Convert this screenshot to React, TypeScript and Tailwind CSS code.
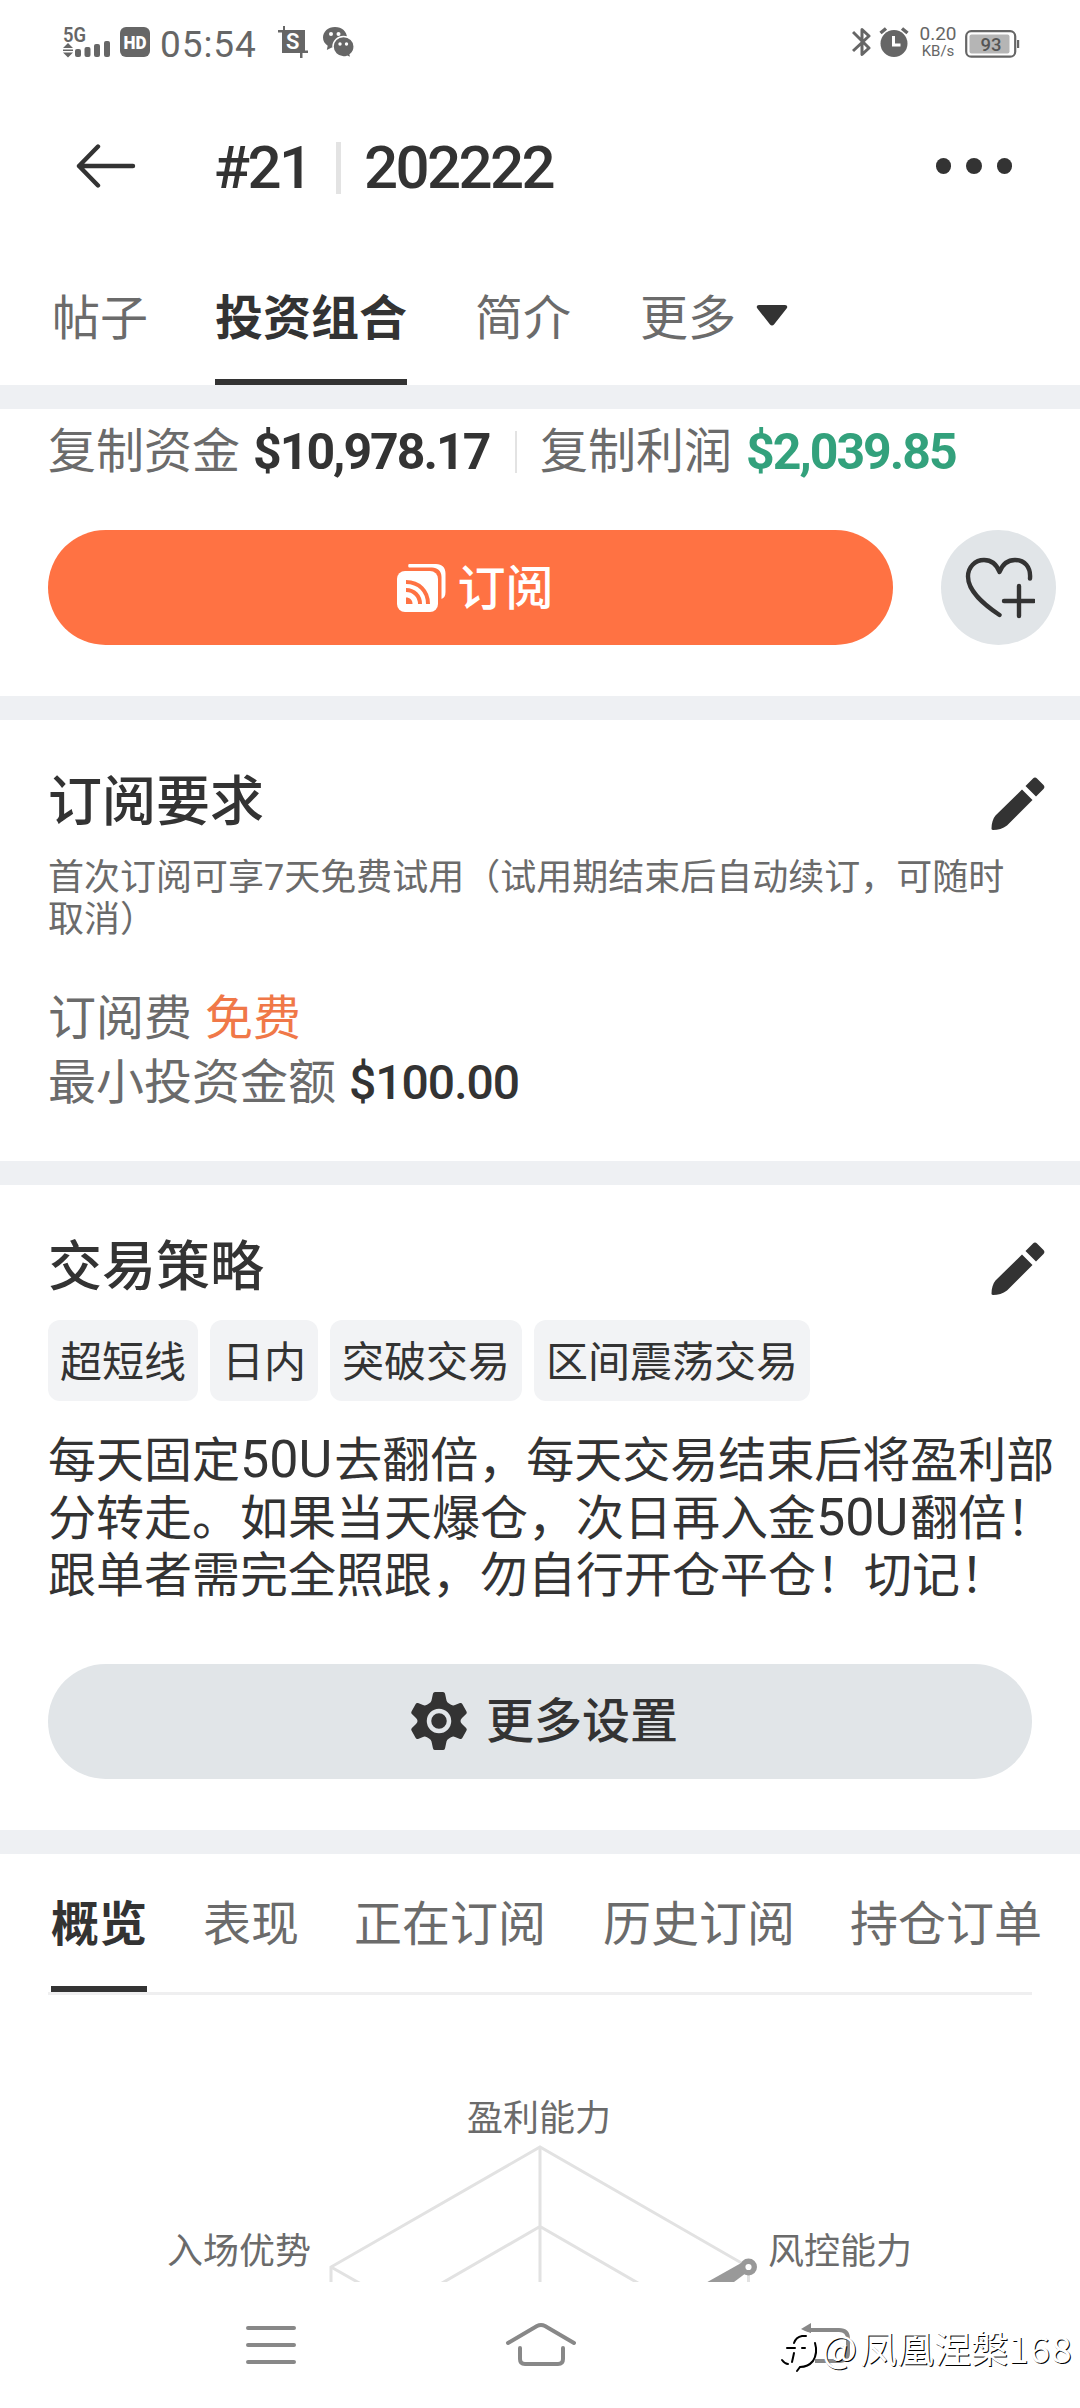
import type { ReactNode } from 'react';

const INK = '#333333';
const STATUS = '#666666';

const mainTabs = [
  { label: '帖子', className: 'ml-[4px]' },
  { label: '投资组合', className: 'ml-[67px]', active: true },
  { label: '简介', className: 'ml-[68px]' },
  { label: '更多', className: 'ml-[69px]' },
];

const tags = ['超短线', '日内', '突破交易', '区间震荡交易'];

const detailTabs = [
  { label: '概览', className: 'ml-[3px]', active: true },
  { label: '表现', className: 'ml-[56px]' },
  { label: '正在订阅', className: 'ml-[55px]' },
  { label: '历史订阅', className: 'ml-[57px]' },
  { label: '持仓订单', className: 'ml-[55px]' },
];

export default function App() {
  return (
    <div className="relative flex h-[2408px] w-[1080px] flex-col overflow-hidden bg-white font-['Roboto','Noto_Sans_CJK_SC',sans-serif] text-[#333]">
      <StatusBar />
      <Header />
      <MainTabs />
      <Band />
      <Summary />
      <Band />
      <Requirements />
      <Band />
      <Strategy />
      <Band />
      <DetailTabs />
      <Radar />
      <NavBar />
      <Watermark />
    </div>
  );
}

function Band() {
  return <div className="h-6 shrink-0 bg-[#eef0f3]" />;
}

function StatusBar() {
  return (
    <div className="flex h-[84px] shrink-0 items-center pr-[60px] pl-[61px] text-[#666]">
      <svg width="50" height="44" viewBox="-2 -6 50 44" fill={STATUS}>
        <text x="0" y="15.500" fontSize="20" fontWeight="600" textLength="23" lengthAdjust="spacingAndGlyphs">5G</text>
        <path d="M5 17l5 5H0zM0 23.500h10V25H0zM0 26.500h10l-5 5z" />
        <rect x="12" y="23" width="6" height="8" rx="2" />
        <rect x="21.500" y="21" width="6" height="10" rx="2" />
        <rect x="31" y="18" width="6" height="13" rx="2" />
        <rect x="41" y="15" width="6" height="16" rx="2" />
      </svg>
      <svg className="ml-[9px]" width="30" height="30" viewBox="0 0 30 30">
        <rect width="30" height="30" rx="6" fill={STATUS} />
        <text x="3.500" y="22" fontSize="19" fontWeight="900" textLength="23" lengthAdjust="spacingAndGlyphs" fill="#fff">HD</text>
      </svg>
      <span className="mt-[5px] ml-[10px] w-[118px] text-[37px] leading-none tracking-[0.9px]">05:54</span>
      <svg width="30" height="32" viewBox="0 0 30 32">
        <path d="M5 0v4H0v2.500h4V27h18v5h2.500v-5H30v-2.500h-3V4H7V0z" fill={STATUS} />
        <text x="8" y="23" fontSize="22" fontWeight="600" fill="#fff">S</text>
      </svg>
      <svg className="ml-[15px]" width="32" height="32" viewBox="0 0 32 32">
        <path d="M12 1C5 1 0 5.700 0 11.500c0 3.500 1.800 6.300 4.700 8.200L3.800 24l5-2.500c1 .3 2.100.4 3.200.4 7 0 12-4.700 12-10.400S19 1 12 1z" fill={STATUS} />
        <circle cx="8" cy="8" r="2" fill="#fff" />
        <circle cx="15.500" cy="8" r="2" fill="#fff" />
        <path d="M20.500 10.500C14.500 10.500 10 15 10 20.500S14.500 31 20.500 31c1.300 0 2.500-.2 3.600-.6L28 32l-.8-3.500c2.500-1.800 4-4.700 4-8 0-5.500-4.600-10-10.700-10z" fill={STATUS} stroke="#fff" strokeWidth="1.500" />
        <circle cx="17" cy="18" r="1.700" fill="#fff" />
        <circle cx="23.500" cy="18" r="1.700" fill="#fff" />
      </svg>
      <div className="flex-1" />
      <svg width="19" height="30" viewBox="0 0 19 30" fill="none" stroke={STATUS} strokeWidth="3" strokeLinejoin="round">
        <path d="M1 5l16 16-7 6.500V2.500L17 9 1 24" />
      </svg>
      <svg className="ml-[8px]" width="30" height="30" viewBox="0 0 30 30">
        <circle cx="15" cy="16.500" r="13.500" fill={STATUS} />
        <path d="M1.500 6L7 1.500M28.500 6L23 1.500" stroke={STATUS} strokeWidth="3.500" />
        <path d="M14.500 9v9h7" fill="none" stroke="#fff" strokeWidth="3" />
      </svg>
      <div className="ml-[9px] flex w-[40px] flex-col items-center">
        <span className="text-[19px] leading-[18px]">0.20</span>
        <span className="text-[15px] leading-[16px]">KB/s</span>
      </div>
      <svg className="mt-[3px] ml-[7px]" width="55" height="28" viewBox="0 0 55 28">
        <rect x="1.200" y="1.200" width="49" height="25.500" rx="5" fill="#fff" stroke={STATUS} strokeWidth="2.200" />
        <rect x="4.500" y="4.500" width="40" height="19" rx="2" fill="#b5b5b5" />
        <rect x="52" y="10" width="2.200" height="8" fill={STATUS} />
        <text x="26" y="21" fontSize="18.500" fontWeight="500" textAnchor="middle" fill="#555">93</text>
      </svg>
    </div>
  );
}

function Header() {
  return (
    <header className="flex h-[164px] shrink-0 items-center pr-[67px] pl-[76px]">
      <svg width="60" height="44" viewBox="0 0 60 44" fill="none" stroke={INK} strokeWidth="4.400" strokeLinecap="round" strokeLinejoin="round">
        <path d="M22 2.500L3 22l19 19.500M3 22h54" />
      </svg>
      <h1 className="mt-[3px] ml-[78px] flex items-center text-[60px] leading-none font-medium tracking-[-2.600px]">
        <span className="w-[122px]">#21</span>
        <span className="h-[52px] w-[5px] bg-[#e3e3e3]" />
        <span className="ml-[23px]">202222</span>
      </h1>
      <div className="flex-1" />
      <div className="flex gap-[15px] pr-px">
        <i className="size-[15.500px] rounded-full bg-[#333]" />
        <i className="size-[15.500px] rounded-full bg-[#333]" />
        <i className="size-[15.500px] rounded-full bg-[#333]" />
      </div>
    </header>
  );
}

function MainTabs() {
  return (
    <nav className="flex h-[137px] shrink-0 pl-12 text-[48px] whitespace-nowrap">
      {mainTabs.map((t) => (
        <Tab key={t.label} className={t.className} active={t.active}>
          {t.label}
        </Tab>
      ))}
      <svg className="mt-[57px] ml-[20px]" width="32" height="22" viewBox="0 0 32 22" fill={INK}>
        <path d="M3 0h26c2 0 3 2 1.600 3.500L18 19.500c-1 1.300-3 1.300-4 0L1.400 3.500C0 2 1 0 3 0z" />
      </svg>
    </nav>
  );
}

function Tab({ className, active, children }: { className: string; active?: boolean; children: ReactNode }) {
  return (
    <div
      className={`${className} border-b-6 pt-[36px] leading-[70px] ${
        active ? 'border-[#333] font-bold text-[#333]' : 'border-transparent text-[#6b6b6b]'
      }`}
    >
      {children}
    </div>
  );
}

function Summary() {
  return (
    <section className="flex h-[287px] shrink-0 flex-col pl-12 text-[48px]">
      <div className="mt-[5px] flex h-[76px] items-center leading-none whitespace-nowrap text-[#6b6b6b]">
        <span>复制资金</span>
        <b className="-mt-px ml-[13px] w-[262px] text-[50px] tracking-[-2px] text-[#333]">$10,978.17</b>
        <span className="h-[42px] w-[2px] bg-[#e3e3e3]" />
        <span className="ml-[23px]">复制利润</span>
        <b className="-mt-px ml-[14px] text-[50px] tracking-[-2px] text-[#33a17c]">$2,039.85</b>
      </div>
      <div className="mt-[40px] flex">
        <button className="flex h-[115px] w-[845px] items-center justify-center rounded-full bg-[#ff7243] pl-[10px] text-white">
          <svg width="49" height="49" viewBox="0 0 49 49" fill="none">
            <path d="M12 1h27c6 0 9.500 3.500 9.500 9.500V29c0 4-1.500 6-4 7V14c0-6-4-9.500-9.500-9.500H12c-1 0-1-3.500 0-3.500z" fill="#fff" />
            <rect x="0" y="8" width="41" height="41" rx="8" fill="#fff" />
            <g stroke="#ff7243" strokeWidth="4">
              <path d="M9 19c13 0 22 9 22 22M9 27c8 0 14 6 14 14" />
              <path d="M9 34.500c4 0 6.500 2.500 6.500 6.500H9z" fill="#ff7243" stroke="none" />
            </g>
          </svg>
          <span className="mt-[2px] ml-[11px] leading-none font-medium">订阅</span>
        </button>
        <button className="ml-12 flex size-[115px] items-center justify-center rounded-full bg-[#e1e5e8]">
          <svg width="72" height="62" viewBox="0 0 72 62" fill="none" stroke={INK} strokeWidth="4.400" strokeLinecap="round" strokeLinejoin="round">
            <path d="M36.500 58C21 47.500 5 34.500 5 19.500 5 10 12 3 21 3c7 0 12.500 4 15.500 12C39.500 7 45 3 52 3c9.500 0 16 7 15 18.500M56 29v30M41 44h30" />
          </svg>
        </button>
      </div>
    </section>
  );
}

function SectionTitle({ children }: { children: string }) {
  return (
    <div className="flex h-[80px] items-center justify-between pr-[34px]">
      <h2 className="mt-[5px] text-[54px] leading-none font-medium">{children}</h2>
      <svg className="mt-[8px]" width="56" height="56" viewBox="0 0 56 56" fill={INK}>
        <path d="M43 2.500c1.200-1.200 2.800-1.200 4 0l6.500 6.500c1.200 1.200 1.200 2.800 0 4L46 20.500 35.500 10zM32 13.500L42.500 24 17 49.500c-4 3-9 4.500-14 4.500-1.200 0-1.500-.8-1.500-1.500 0-5 1.500-10 4-13z" />
      </svg>
    </div>
  );
}

function Requirements() {
  return (
    <section className="h-[441px] shrink-0 pt-[40px] pl-12">
      <SectionTitle>订阅要求</SectionTitle>
      <p className="mt-[17px] w-[1000px] text-[36px] leading-[42px] text-[#6b6b6b]">
        首次订阅可享7天免费试用（试用期结束后自动续订，可随时
        <br />
        取消）
      </p>
      <div className="mt-[46px] flex h-[64px] items-center text-[48px] leading-none text-[#6b6b6b]">
        订阅费<span className="ml-[13px] text-[#f07848]">免费</span>
      </div>
      <div className="flex h-[64px] items-center text-[48px] leading-none text-[#6b6b6b]">
        最小投资金额<span className="ml-[13px] font-medium tracking-[-1px] text-[#333]">$100.00</span>
      </div>
    </section>
  );
}

function Strategy() {
  return (
    <section className="h-[645px] shrink-0 pt-[40px] pl-12">
      <SectionTitle>交易策略</SectionTitle>
      <div className="mt-[15px] flex gap-3">
        {tags.map((t) => (
          <span key={t} className="flex h-[81px] items-center rounded-xl bg-[#f2f3f5] px-3 pt-[4px] text-[42px] leading-none">
            {t}
          </span>
        ))}
      </div>
      <p className="mt-[31px] text-[48px] leading-[57.500px] whitespace-nowrap">
        每天固定<Amount />去翻倍，每天交易结束后将盈利部
        <br />
        分转走。如果当天爆仓，次日再入金<Amount />翻倍！
        <br />
        跟单者需完全照跟，勿自行开仓平仓！切记！
      </p>
      <button className="mt-[59px] flex h-[115px] w-[984px] items-center justify-center rounded-full bg-[#e1e5e8] pl-[10px] text-[48px] font-medium">
        <svg className="-ml-[2px]" width="58" height="58" viewBox="0 0 58 58">
          <path
            d="M23 1.500Q23.500 0 25 0h8q1.500 0 2 1.500l1.500 7q.5 2 2.500 3l2 1.200q2 1.200 4 .4l5-2q1.500-.5 2.300.8l4.200 7.500q.8 1.500-.4 2.600L52 26q-1.500 1.500-1.500 3t1.500 3l4.100 4q1.200 1.100.4 2.600l-4.200 7.500q-.8 1.300-2.300.8l-5-2q-2-.8-4 .4l-2 1.200q-2 1-2.500 3l-1.500 7Q34.500 58 33 58h-8q-1.500 0-2-1.500l-1.500-7q-.5-2-2.500-3l-2-1.200q-2-1.200-4-.4l-5 2q-1.500.5-2.300-.8L1.500 38.600Q.7 37.100 1.900 36L6 32q1.500-1.500 1.500-3T6 26l-4.100-4Q.7 20.900 1.500 19.400l4.200-7.500q.8-1.300 2.300-.8l5 2q2 .8 4-.4l2-1.200q2-1 2.500-3z"
            fill={INK}
          />
          <circle cx="29" cy="29" r="10" fill="none" stroke="#e1e5e8" strokeWidth="4.500" />
        </svg>
        <span className="mt-[2px] ml-[18px] leading-none">更多设置</span>
      </button>
    </section>
  );
}

function Amount() {
  return <span className="mr-[2px] text-[52px] leading-none">50U</span>;
}

function DetailTabs() {
  return (
    <nav className="mx-12 flex h-[141px] shrink-0 border-b-3 border-[#efeff0] text-[48px] whitespace-nowrap">
      {detailTabs.map((t) => (
        <Tab key={t.label} className={t.className} active={t.active}>
          {t.label}
        </Tab>
      ))}
    </nav>
  );
}

function Radar() {
  // Only the top part of the hexagon is scrolled into view
  return (
    <svg className="shrink-0" width="1080" height="287" viewBox="0 1995 1080 287" fill="none">
      <g stroke="#e2e2e2" strokeWidth="3">
        <path d="M331 2300V2267L540 2147l208.500 120v33" />
        <path d="M540 2147v150M331 2267l60 34M436 2286.500l104-60 104 60" />
      </g>
      <path d="M743 2262l7 8-20 15h-28z" fill="#999" />
      <circle cx="748.500" cy="2267" r="5.800" fill="#fff" stroke="#999" strokeWidth="5.400" />
      <g fill="#6b6b6b" fontSize="36">
        <text x="467" y="2130.500">盈利能力</text>
        <text x="167" y="2263.500">入场优势</text>
        <text x="768" y="2263.500">风控能力</text>
      </g>
    </svg>
  );
}

function NavBar() {
  return (
    <div className="flex h-[126px] shrink-0 items-center pl-[245px] text-[#888]">
      <svg width="52" height="50" viewBox="0 0 52 50" stroke="currentColor" strokeWidth="4" strokeLinecap="round">
        <path d="M3 8h46M3 25h46M3 42h46" />
      </svg>
      <svg className="ml-[208px]" width="72" height="50" viewBox="0 0 72 50" fill="none" stroke="currentColor" strokeWidth="4" strokeLinecap="round">
        <path d="M3 23L32 6q4-2 8 0l29 17M15 28v11q0 5 5 5h33q5 0 5-5V28" />
      </svg>
      <svg className="ml-[223px]" width="52" height="50" viewBox="0 0 52 50" fill="none" stroke="currentColor" strokeWidth="4">
        <path d="M8 10h31q9 0 9 9v13q0 9-9 9H15" />
        <path d="M11 3v11L1 9z" fill="currentColor" stroke="none" />
      </svg>
    </div>
  );
}

function Watermark() {
  return (
    <div className="absolute top-[2320px] left-[780px] flex items-center font-['Noto_Sans_CJK_SC',sans-serif] text-white">
      <svg width="40" height="54" viewBox="0 0 40 54" fill="none" strokeLinecap="round">
        <path d="M3 38c6-3 7-9 9-15 2-6 6-9 12-9 7 0 10 4 10 12 0 9-4 15-13 17l-4 5" fill="#fff" stroke="#fff" strokeWidth="5" />
        <path
          d="M2 40q3 4 6 4M12 42q1-4 2-9M14 23q2-6 8-7h4M7 28h8M22 28h3M35 23q3 10-2 18-5 6-13 6l-3 4"
          stroke="#000"
          strokeWidth="2"
        />
      </svg>
      <span className="ml-[2px] flex text-[37px] leading-[54px] whitespace-nowrap [text-shadow:1px_1px_0_#000]">
        <span className="w-[38px]">@</span>
        <span>凤凰涅槃</span>
        <span className="tracking-[1px]">168</span>
      </span>
    </div>
  );
}
